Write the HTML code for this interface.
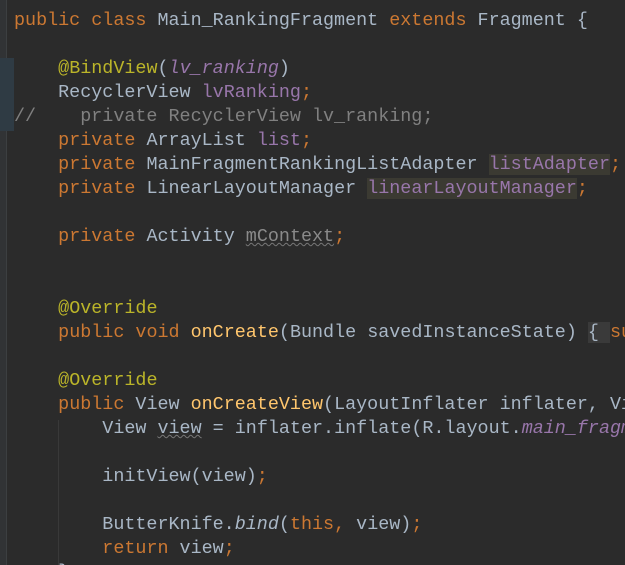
<!DOCTYPE html>
<html><head><meta charset="utf-8"><style>
html,body{margin:0;padding:0;background:#2b2b2b;width:625px;height:565px;overflow:hidden;position:relative}
.g{position:absolute;left:0;top:0;width:6px;height:565px;background:#313335;border-right:1px solid #3c3f41}
.hl{position:absolute;left:0;top:58px;width:14px;height:73px;background:#2f3b44}
pre{position:absolute;left:14px;top:9px;width:611px;height:556px;overflow:hidden;margin:0;font-family:"Liberation Mono",monospace;font-size:18.4px;line-height:24px;color:#a9b7c6;white-space:pre}
.k{color:#cc7832}.a{color:#bbb529}.p{color:#9876aa}.i{font-style:italic}.c{color:#808080}.f{color:#ffc66d}
.u{background:#3b3a32}.gr{color:#8a8a8a}.w{text-decoration:underline wavy #777;text-decoration-thickness:1px}
.b{background:#3a3a3a}
.ig{position:absolute;left:58px;top:420px;width:1px;height:145px;background:#393939}
</style></head><body>
<div class="g"></div><div class="hl"></div><div class="ig"></div>
<pre><span class="k">public class</span> Main_RankingFragment <span class="k">extends</span> Fragment {

    <span class="a">@BindView</span>(<span class="p i">lv_ranking</span>)
    RecyclerView <span class="p">lvRanking</span><span class="k">;</span>
<span class="c">//    private RecyclerView lv_ranking;</span>
    <span class="k">private</span> ArrayList <span class="p">list</span><span class="k">;</span>
    <span class="k">private</span> MainFragmentRankingListAdapter <span class="p u">listAdapter</span><span class="k">;</span>
    <span class="k">private</span> LinearLayoutManager <span class="p u">linearLayoutManager</span><span class="k">;</span>

    <span class="k">private</span> Activity <span class="gr w">mContext</span><span class="k">;</span>


    <span class="a">@Override</span>
    <span class="k">public void</span> <span class="f">onCreate</span>(Bundle savedInstanceState) <span class="b">{ </span><span class="k">super</span>

    <span class="a">@Override</span>
    <span class="k">public</span> View <span class="f">onCreateView</span>(LayoutInflater inflater, ViewGroup
        View <span class="w">view</span> = inflater.inflate(R.layout.<span class="p i">main_fragment</span>

        initView(view)<span class="k">;</span>

        ButterKnife.<span class="i">bind</span>(<span class="k">this,</span> view)<span class="k">;</span>
        <span class="k">return</span> view<span class="k">;</span>
    }
</pre>
</body></html>
